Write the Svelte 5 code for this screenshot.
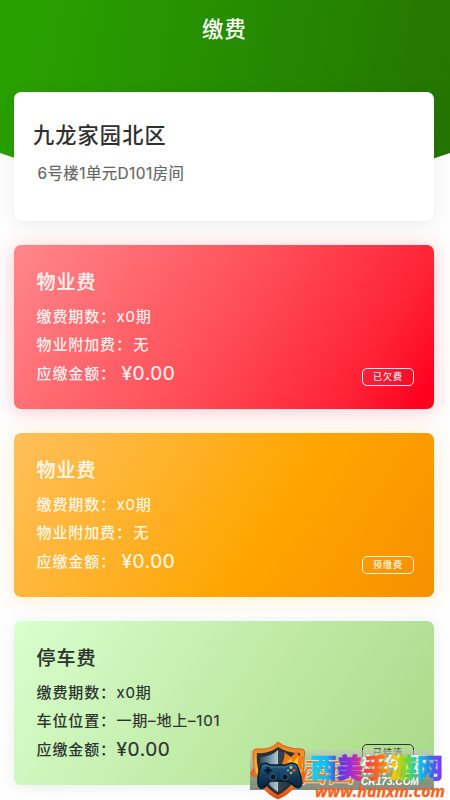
<script>
  const house = { name: "九龙家园北区", room: "6号楼1单元D101房间" }

  const bills = [
    {
      type: "overdue",
      title: "物业费",
      rows: [
        { label: "缴费期数：", value: "x0期" },
        { label: "物业附加费：", value: "无", wide: true },
      ],
      amount: "¥0.00",
      status: "已欠费",
    },
    {
      type: "prepay",
      title: "物业费",
      rows: [
        { label: "缴费期数：", value: "x0期" },
        { label: "物业附加费：", value: "无", wide: true },
      ],
      amount: "¥0.00",
      status: "预缴费",
    },
    {
      type: "settled",
      title: "停车费",
      rows: [
        { label: "缴费期数：", value: "x0期" },
        { label: "车位位置：", value: "一期–地上–101" },
      ],
      amount: "¥0.00",
      status: "已结清",
    },
  ]
</script>

<div class="page">
  <header class="header">
    <h1>缴费</h1>
  </header>

  <main class="content">
    <section class="card house">
      <h2>{house.name}</h2>
      <p>{house.room}</p>
    </section>

    {#each bills as bill}
      <section class={`card bill ${bill.type}`}>
        <h3>{bill.title}</h3>
        {#each bill.rows as row}
          <div class="row">
            <span class="label" class:wide={row.wide}>{row.label}</span>
            <span>{row.value}</span>
          </div>
        {/each}
        <div class="row total">
          <span class="label">应缴金额：</span>
          <span class="amount">{bill.amount}</span>
        </div>
        <span class="status">{bill.status}</span>
      </section>
    {/each}
  </main>

  <div class="watermark">
    <svg width="200" height="65" viewBox="250 735 200 65">
      <defs>
        <linearGradient id="band" x1="0" y1="0" x2="0" y2="1">
          <stop offset="0" stop-color="#c3cbb9" stop-opacity="0.6" />
          <stop offset="0.45" stop-color="#94a08b" stop-opacity="0.7" />
          <stop offset="1" stop-color="#6c7368" stop-opacity="0.85" />
        </linearGradient>
        <linearGradient id="rainbow" gradientUnits="userSpaceOnUse" x1="311" y1="0" x2="443" y2="0">
          <stop offset="0" stop-color="#08d5ee" />
          <stop offset="0.12" stop-color="#18b8f5" />
          <stop offset="0.2" stop-color="#4a40e8" />
          <stop offset="0.31" stop-color="#a629d8" />
          <stop offset="0.42" stop-color="#ff3b45" />
          <stop offset="0.54" stop-color="#ff7a10" />
          <stop offset="0.63" stop-color="#ffc800" />
          <stop offset="0.72" stop-color="#71dd20" />
          <stop offset="0.82" stop-color="#08c8e8" />
          <stop offset="0.91" stop-color="#3170f5" />
          <stop offset="1" stop-color="#9828f0" />
        </linearGradient>
        <linearGradient id="flame" x1="0" y1="0" x2="0" y2="1">
          <stop offset="0" stop-color="#f07a18" />
          <stop offset="0.5" stop-color="#ffb32b" />
          <stop offset="1" stop-color="#e9430d" />
        </linearGradient>
        <linearGradient id="steel" x1="0" y1="0" x2="1" y2="0">
          <stop offset="0" stop-color="#2b4d68" />
          <stop offset="0.5" stop-color="#b7cad3" />
          <stop offset="0.51" stop-color="#38444e" />
          <stop offset="1" stop-color="#1b2a38" />
        </linearGradient>
        <linearGradient id="pad" x1="0" y1="0" x2="0" y2="1">
          <stop offset="0" stop-color="#276287" />
          <stop offset="0.5" stop-color="#123b5b" />
          <stop offset="1" stop-color="#0a2038" />
        </linearGradient>
      </defs>

      <rect x="250" y="750" width="184" height="40" fill="url(#band)" />
      <text class="oldName" x="299" y="782" textLength="56" lengthAdjust="spacingAndGlyphs">西西</text>
      <text class="oldSoft" x="358" y="773" textLength="66" lengthAdjust="spacingAndGlyphs">软件园</text>
      <text class="oldSite" x="361" y="785" textLength="58" lengthAdjust="spacingAndGlyphs">CR173.COM</text>

      <!-- shield -->
      <path d="M278 742Q286 749 302 749Q306 749 304 758Q305 778 293 789Q286 796 278 799Q268 795 261 785Q253 774 253 754Q252 748 259 749Q271 750 278 742Z" fill="url(#flame)" stroke="#b84a14" stroke-width="0.7" />
      <path d="M278 747Q287 753 300 753Q301 773 292 784Q286 791 278 795Q267 789 262 780Q256 769 257 753Q269 754 278 747Z" fill="#25323b" />
      <path d="M278 750Q286 755 296 756Q297 773 290 783Q285 789 278 792Q269 786 265 779Q260 769 260 757Q271 757 278 750Z" fill="url(#steel)" />
      <path d="M281 766Q286 756 284 752L291 757L298 750Q296 757 304 756Q300 763 303 770L292 767Z" fill="#f77a12" />
      <path d="M285 767Q288 761 291 758L293 763L299 755Q297 764 299 768Z" fill="#ffc52f" />
      <path d="M254 769L252 774L255 777M303 771Q305 778 299 783" fill="none" stroke="#f46012" stroke-width="3" />

      <!-- controller -->
      <path d="M262 764Q266 762 270 765L286 765Q291 761 297 765Q301 774 302 783Q300 791 294 786L288 781L270 781L265 787Q259 791 258 784Q257 773 262 764Z" fill="url(#pad)" stroke="#071725" stroke-width="1.3" />
      <path d="M262 767Q266 764 271 767L286 767Q292 763 297 767" fill="none" stroke="#3f7896" />
      <path d="M268 767V774M264.500 770.500H271.500" stroke="#071827" stroke-width="2.4" />
      <circle cx="273" cy="777" r="3.200" fill="#081724" stroke="#39647c" />
      <circle cx="285" cy="777" r="3.200" fill="#081724" stroke="#39647c" />
      <circle cx="291" cy="767.500" r="1.400" fill="#f3c92f" />
      <circle cx="294" cy="770.500" r="1.400" fill="#ed4d31" />
      <circle cx="288" cy="770.500" r="1.300" fill="#36a6db" />
      <circle cx="291" cy="773" r="1.300" fill="#f3a22f" />

      <text class="brand" x="310" y="778" textLength="133" lengthAdjust="spacingAndGlyphs">西美手游网</text>
      <text class="url" x="315" y="797" textLength="130" lengthAdjust="spacingAndGlyphs">www.hanxm.com</text>
    </svg>
  </div>
</div>

<style>
  :global(body) {
    margin: 0;
    background: #fefefe;
  }
  .page {
    position: relative;
    width: 450px;
    height: 800px;
    overflow: hidden;
    font-family: Inter, "Noto Sans CJK SC", sans-serif;
    color: #2c3430;
  }
  h1,
  h2,
  h3,
  p {
    margin: 0;
    font-weight: 500;
  }
  .header {
    height: 168px;
    box-sizing: border-box;
    padding: 13px 1px 0 0;
    background: linear-gradient(100deg, #28a000 8%, #258800 60%, #247400 100%);
    clip-path: polygon(0 0, 100% 0, 100% 153px, 405px 168px, 45px 168px, 0 153px);
    text-align: center;
  }
  h1 {
    color: #fff;
    font-size: 21.4px;
    line-height: 32px;
    letter-spacing: 1px;
  }
  .content {
    display: flex;
    flex-direction: column;
    gap: 24px;
    margin-top: -76px;
    padding: 0 16px 0 14px;
  }
  .card {
    position: relative;
    box-sizing: border-box;
    border-radius: 7px;
  }
  .house {
    height: 129px;
    padding: 27px 19px;
    background: #fff;
    box-shadow: 0 3px 18px rgba(0, 0, 0, 0.08);
  }
  .house h2 {
    color: #303030;
    font-size: 21.2px;
    line-height: 32px;
    letter-spacing: 1.1px;
  }
  .house p {
    margin-top: 10.5px;
    padding-left: 4.5px;
    color: #666;
    font-size: 15.4px;
    font-weight: 400;
    line-height: 24px;
    letter-spacing: 0.45px;
    -webkit-text-stroke: 0.2px currentColor;
  }
  .bill {
    height: 164px;
    padding: 23px 22.5px;
  }
  .overdue {
    color: #fff0ee;
    background: linear-gradient(123deg, #ff878b 0%, #ff4e57 50%, #ff2237 82%, #ff001f 97%);
    box-shadow: 0 2px 20px rgba(255, 40, 50, 0.25);
  }
  .prepay {
    color: #fff7e6;
    background: linear-gradient(123deg, #ffc05b 0%, #ffa500 60%, #f79000 100%);
    box-shadow: 0 2px 20px rgba(255, 165, 0, 0.2);
  }
  .settled {
    background: linear-gradient(123deg, #d9ffcd 0%, #bfe9a4 55%, #a8d987 100%);
    box-shadow: 0 2px 16px rgba(60, 130, 80, 0.1);
  }
  h3 {
    margin-bottom: 5px;
    font-size: 19px;
    line-height: 29px;
    letter-spacing: 1px;
    -webkit-text-stroke: 0.2px currentColor;
  }
  .row {
    display: flex;
    align-items: center;
    height: 27.5px;
    font-size: 15px;
    font-weight: 500;
    letter-spacing: 0.9px;
    white-space: nowrap;
  }
  .row span:last-child {
    font-weight: 400;
    letter-spacing: 0.8px;
    -webkit-text-stroke: 0.2px currentColor;
  }
  .label {
    width: 80px;
  }
  .label.wide {
    width: 97px;
  }
  .row.total {
    height: 31px;
  }
  .row .amount:last-child {
    padding: 1px 0 0 5px;
    font-size: 19px;
    letter-spacing: 0.6px;
  }
  .settled .row .amount:last-child {
    padding-left: 0;
  }
  .status {
    position: absolute;
    right: 20px;
    bottom: 23px;
    width: 52px;
    height: 18px;
    box-sizing: border-box;
    border: 1.5px solid currentColor;
    border-radius: 5px;
    font-size: 9px;
    font-weight: 500;
    line-height: 16px;
    letter-spacing: 1px;
    text-align: center;
  }
  .watermark {
    position: absolute;
    left: 250px;
    top: 735px;
  }
  .watermark svg {
    display: block;
  }
  .oldName,
  .oldSoft {
    font-family: "Noto Sans CJK SC", sans-serif;
    font-size: 27px;
    font-style: italic;
    font-weight: 700;
    fill: #d78232;
    stroke: #f3dfc7;
    stroke-width: 0.8;
  }
  .oldSoft {
    font-size: 22px;
    fill: #f3f3ee;
    stroke: none;
  }
  .oldSite {
    font-family: "Liberation Sans", sans-serif;
    font-size: 10px;
    font-style: italic;
    font-weight: 700;
    fill: #fff;
  }
  .brand {
    font-family: "Noto Sans CJK SC", sans-serif;
    font-size: 27px;
    font-weight: 900;
    fill: url(#rainbow);
    stroke: url(#rainbow);
    stroke-width: 0.3;
  }
  .url {
    font-family: "Open Sans", sans-serif;
    font-size: 16px;
    font-style: italic;
    font-weight: 700;
    fill: #f4661f;
    stroke: #f4661f;
    stroke-width: 0.3;
  }
</style>
